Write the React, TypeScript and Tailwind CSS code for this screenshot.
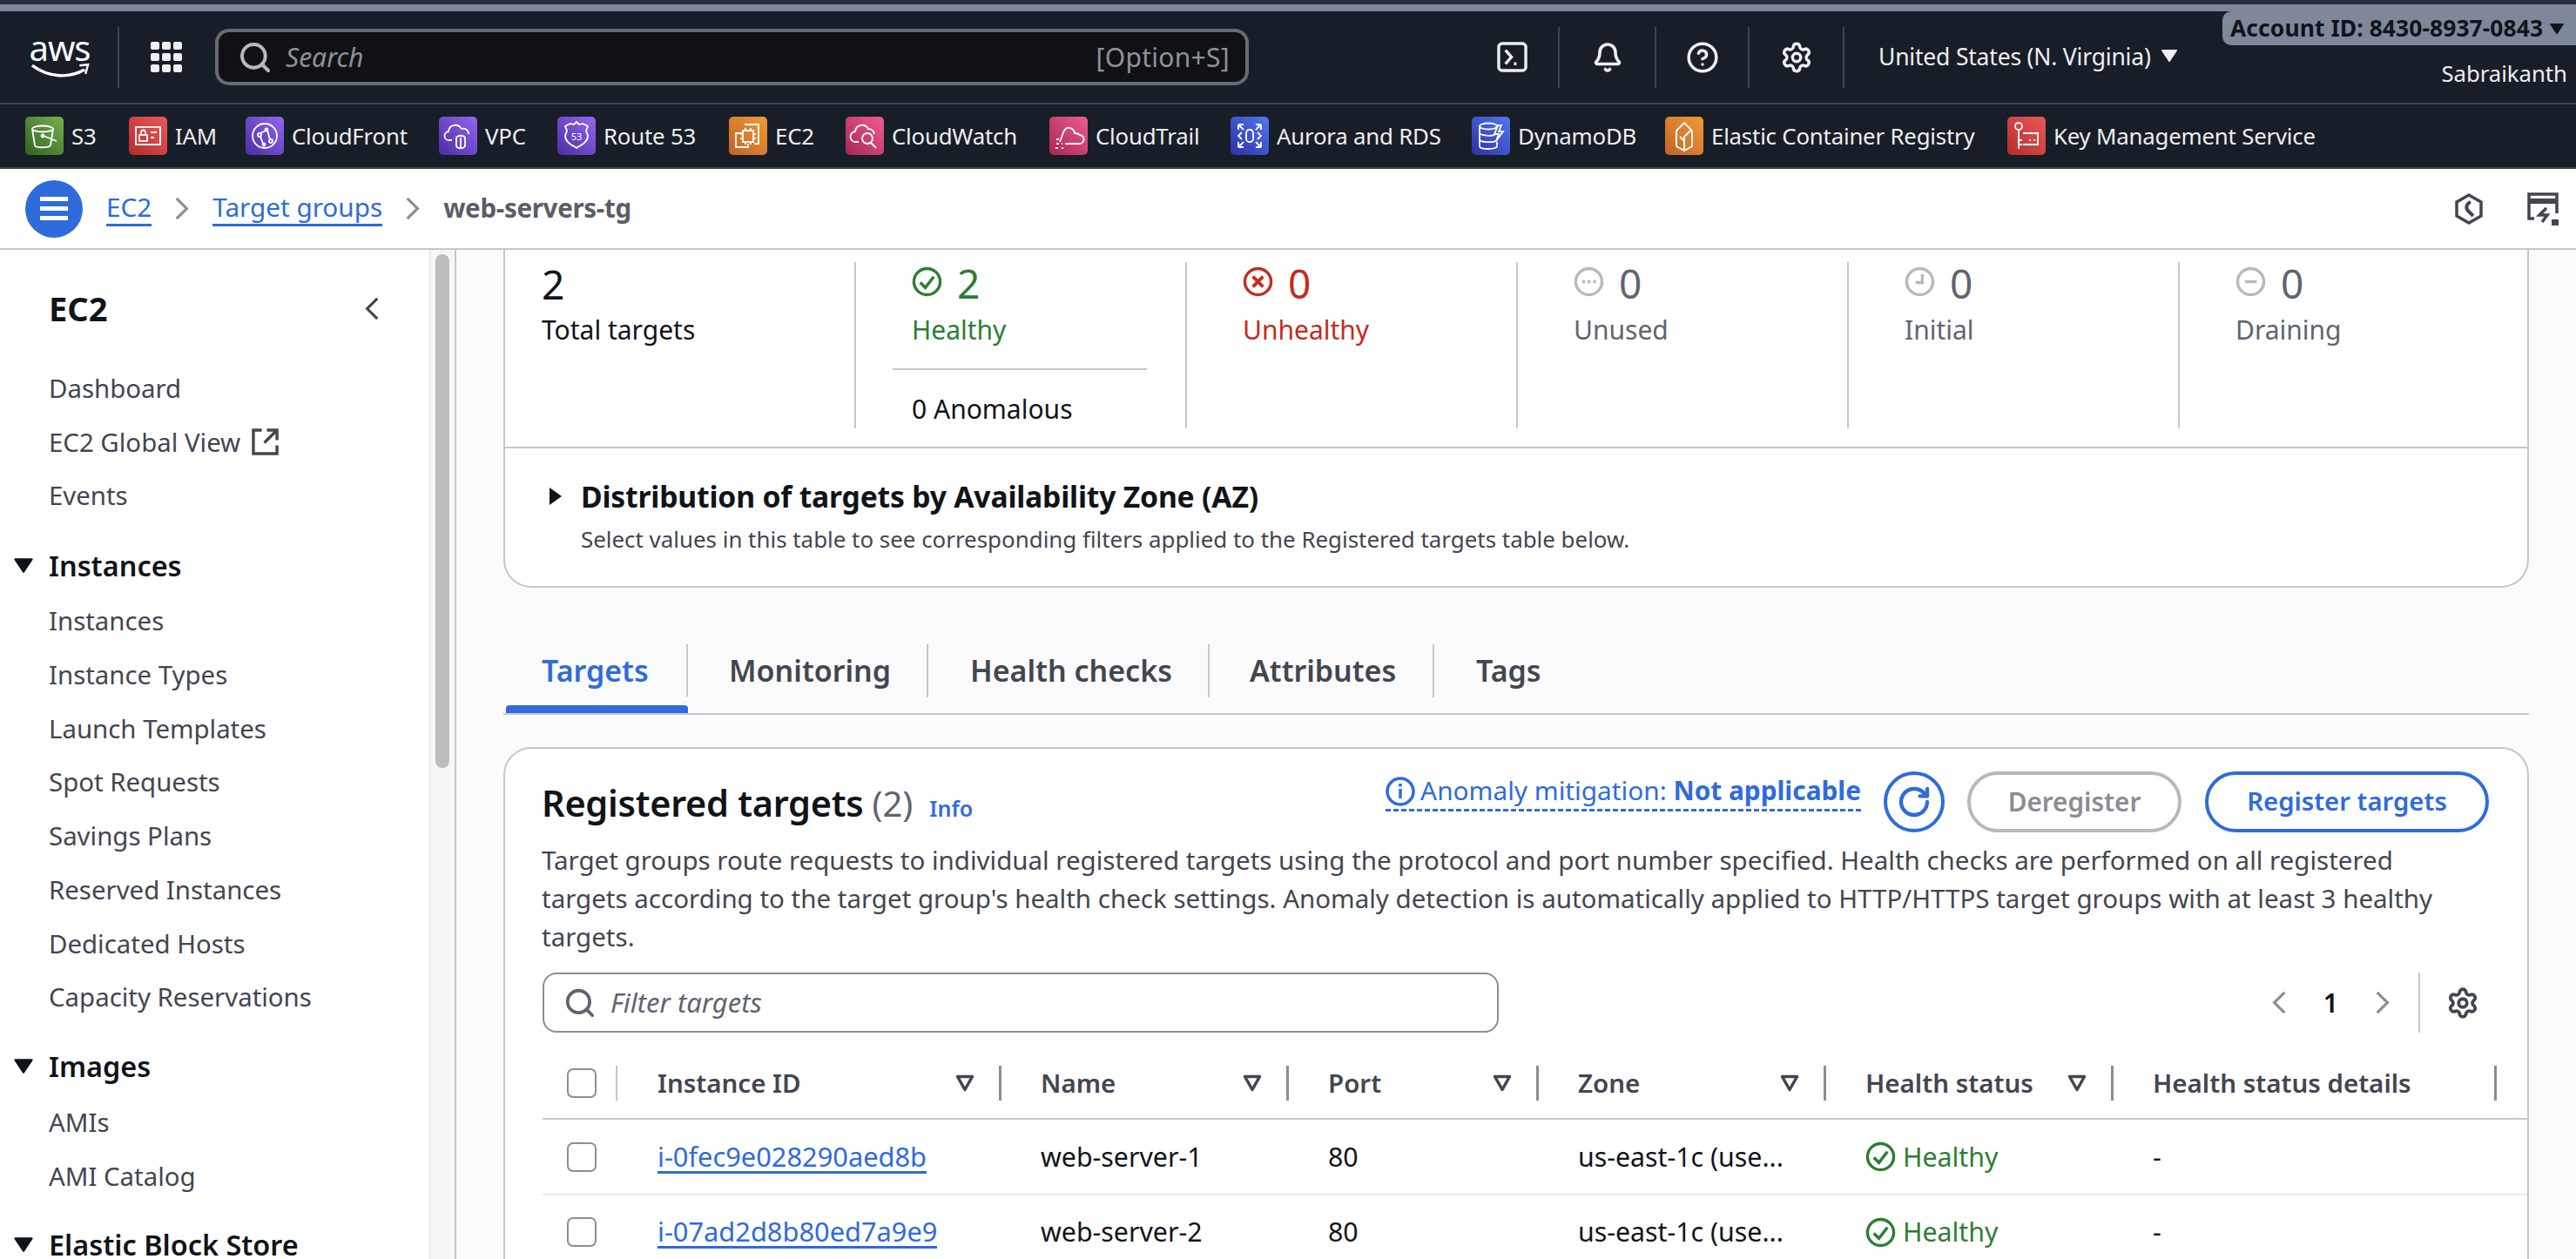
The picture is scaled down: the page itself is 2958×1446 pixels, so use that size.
import { RotateCw, Search, Settings, Bell, CircleHelp } from "lucide-react";
import type { ReactNode } from "react";

const font = { fontFamily: '"Noto Sans", Arial, sans-serif' };

const Tile = ({ cls, children }: { cls: string; children: ReactNode }) => (
  <div className={`w-[44px] h-[44px] rounded-[5px] shrink-0 ${cls}`}>
    <svg viewBox="0 0 44 44" className="w-full h-full" fill="none" stroke="#fff" strokeWidth="1.8">
      {children}
    </svg>
  </div>
);

const green = "bg-linear-to-tr from-[#2f6320] to-[#79b04e]";
const red = "bg-linear-to-tr from-[#b62a2a] to-[#e85a5a]";
const purple = "bg-linear-to-tr from-[#4a2da5] to-[#9566f0]";
const orange = "bg-linear-to-tr from-[#c2622a] to-[#f09c34]";
const pink = "bg-linear-to-tr from-[#a82556] to-[#ee5c8f]";
const blue = "bg-linear-to-tr from-[#2e2fa8] to-[#5278ee]";

const shortcuts: { name: string; w: string; tile: ReactNode }[] = [
  {
    name: "S3",
    w: "w-[119px]",
    tile: (
      <Tile cls={green}>
        <ellipse cx="20" cy="14" rx="12" ry="3.5" />
        <path d="M8 14l3 19c1 3 16 3 18 0l3-19" />
        <circle cx="20" cy="22" r="1.5" />
        <path d="M21 22l15 6" />
      </Tile>
    ),
  },
  {
    name: "IAM",
    w: "w-[134px]",
    tile: (
      <Tile cls={red}>
        <rect x="8" y="12" width="28" height="20" />
        <rect x="12" y="21" width="9" height="7" />
        <path d="M14 21v-3a2.5 2.5 0 0 1 5 0v3M25 18h7M25 24h4" />
      </Tile>
    ),
  },
  {
    name: "CloudFront",
    w: "w-[222px]",
    tile: (
      <Tile cls={purple}>
        <circle cx="22" cy="22" r="14" />
        <circle cx="16" cy="21" r="2" />
        <circle cx="24" cy="15" r="1.5" />
        <circle cx="29" cy="28" r="2" />
        <circle cx="21" cy="32" r="1.5" />
        <path d="M17 19l6-3M25 16l3 10M17 23l3 8" />
      </Tile>
    ),
  },
  {
    name: "VPC",
    w: "w-[136px]",
    tile: (
      <Tile cls={purple}>
        <path d="M15 27h-3a5 5 0 0 1-1-10 8 8 0 0 1 15-3 6 6 0 0 1 8 6" />
        <path d="M20 24c2-3 8-3 10 0v10c-2 3-8 3-10 0z" />
        <path d="M25 24v13" />
      </Tile>
    ),
  },
  {
    name: "Route 53",
    w: "w-[197px]",
    tile: (
      <Tile cls={purple}>
        <path d="M22 6l3 3 4-1 6 3-2 5 2 6c0 7-7 10-13 14-6-4-13-7-13-14l2-6-2-5 6-3 4 1z" />
        <text x="22" y="27" fontSize="11" fill="#fff" stroke="none" textAnchor="middle">
          53
        </text>
      </Tile>
    ),
  },
  {
    name: "EC2",
    w: "w-[134px]",
    tile: (
      <Tile cls={orange}>
        <path d="M18 9h16v22h-5M15 19H8v16h14v-4" />
        <rect x="16" y="16" width="12" height="13" />
        <path d="M19 13v3M25 13v3M19 29v3M25 29v3M13 20h3M13 25h3M28 20h3M28 25h3" />
      </Tile>
    ),
  },
  {
    name: "CloudWatch",
    w: "w-[234px]",
    tile: (
      <Tile cls={pink}>
        <path d="M15 29h-3a6 6 0 0 1-1-12 8 8 0 0 1 15-3 7 7 0 0 1 7 6" />
        <circle cx="25" cy="25" r="6" />
        <path d="M29 30l6 6" />
      </Tile>
    ),
  },
  {
    name: "CloudTrail",
    w: "w-[208px]",
    tile: (
      <Tile cls={pink}>
        <path d="M18 31h16a5 5 0 0 0 1-10 9 9 0 0 0-6-2c-1-6-9-10-13-1l-4 11" />
        <path d="M8 31h3M14 31h1M7 36h3M14 36h2M8 26h3" />
      </Tile>
    ),
  },
  {
    name: "Aurora and RDS",
    w: "w-[277px]",
    tile: (
      <Tile cls={blue}>
        <rect x="18" y="15" width="8" height="14" rx="3.5" />
        <path d="M9 9h6M9 9v6M9 9l6 6M35 9h-6M35 9v6M35 9l-6 6M9 35h6M9 35v-6M9 35l6-6M35 35h-6M35 35v-6M35 35l-6-6M13 18l-4 4 4 4M31 18l4 4-4 4" />
      </Tile>
    ),
  },
  {
    name: "DynamoDB",
    w: "w-[222px]",
    tile: (
      <Tile cls={blue}>
        <ellipse cx="19" cy="11" rx="10" ry="3.5" />
        <path d="M9 11v23c0 4 20 4 20 0v-5M9 18c0 4 15 5 18 2M9 26c0 4 18 4 20 1" />
        <path d="M30 10l-4 10h5l-3 8 8-11h-5l3-7z" />
      </Tile>
    ),
  },
  {
    name: "Elastic Container Registry",
    w: "w-[393px]",
    tile: (
      <Tile cls={orange}>
        <path d="M22 7l9 9v18l-9 5-9-5V16z" />
        <path d="M22 39V23l8-8M22 28l-5-5" />
      </Tile>
    ),
  },
  {
    name: "Key Management Service",
    w: "w-[360px]",
    tile: (
      <Tile cls={red}>
        <circle cx="13" cy="11" r="4" />
        <path d="M13 15v22M13 27h4M13 32h4M18 19h17v13H18" />
        <path d="M25 27h2M30 27h2" />
      </Tile>
    ),
  },
];

const Chev = ({ cls, left }: { cls: string; left?: boolean }) => (
  <svg viewBox="0 0 20 32" className={cls} fill="none" stroke="currentColor" strokeWidth="3.5">
    <path d={left ? "M17 3L4 16l13 13" : "M3 3l13 13L3 29"} />
  </svg>
);

const NavIcon = ({ children, w = "w-[108px]" }: { children: ReactNode; w?: string }) => (
  <div className={`${w} h-[70px] flex items-center justify-center border-r-2 border-[#3f444e]`}>{children}</div>
);

const Tri = ({ cls }: { cls: string }) => (
  <svg viewBox="0 0 20 16" className={cls} fill="currentColor">
    <path d="M2 1h16a1 1 0 0 1 .8 1.6L10.8 14.6a1 1 0 0 1-1.6 0L1.2 2.6A1 1 0 0 1 2 1z" />
  </svg>
);

const TopNav = () => (
  <div className="h-[105px] bg-[#171e27] flex items-center shrink-0 border-b-2 border-[#3f444e] relative box-content">
    <div className="w-[137px] h-[70px] flex flex-col items-center pl-[2px] border-r-2 border-[#3f444e]">
      <span className="text-white text-[40px] leading-[36px] tracking-[-1px] mt-[6px]">aws</span>
      <svg viewBox="0 0 70 22" className="w-[68px] h-[22px] -mt-[1px]" fill="none" stroke="#fff">
        <path d="M2 3c20 15 44 15 62 5" strokeWidth="3.5" />
        <path d="M58 3l10-1-3 11" strokeWidth="2.5" />
      </svg>
    </div>
    <div className="w-[110px] flex justify-center">
      <div className="grid grid-cols-3 gap-[3.5px] pr-[2px]">
        {Array.from({ length: 9 }).map((_, i) => (
          <div key={i} className="w-[9.5px] h-[9.5px] rounded-[2px] bg-[#eeeef2]" />
        ))}
      </div>
    </div>
    <div className="w-[1187px] h-[65px] rounded-[16px] border-[4px] border-[#666a73] bg-[#0f1114] flex items-center pl-[22px] pr-[18px] text-[#8f9198] text-[30px]">
      <Search className="w-[40px] h-[40px] text-[#b8b9be]" strokeWidth={2.4} />
      <span className="italic ml-[15px] flex-1">Search</span>
      <span className="tracking-[0.3px]">[Option+S]</span>
    </div>
    <div className="ml-[249px] flex items-center text-[#eeeef2]">
      <NavIcon w="w-[108px]">
        <svg viewBox="0 0 36 36" className="w-[35px] h-[35px]" fill="none" stroke="currentColor" strokeWidth="3.5">
          <rect x="2" y="2" width="32" height="32" rx="4" />
          <path d="M10 10l7 8-7 8M20 26h3" />
        </svg>
      </NavIcon>
      <NavIcon w="w-[111px]">
        <Bell className="w-[36px] h-[38px]" strokeWidth={2.4} />
      </NavIcon>
      <NavIcon w="w-[107px]">
        <CircleHelp className="w-[38px] h-[38px]" strokeWidth={2.2} />
      </NavIcon>
      <NavIcon w="w-[109px]">
        <Settings className="w-[38px] h-[38px]" strokeWidth={2.2} />
      </NavIcon>
      <div className="flex items-center pl-[39px]">
        <span className="text-[26.5px] tracking-[-0.2px] whitespace-nowrap">United States (N. Virginia)</span>
        <Tri cls="w-[20px] h-[16px] ml-[11px] -mt-[4px]" />
      </div>
    </div>
    <div className="absolute top-0 right-0 w-[406px] h-[39px] bg-[#7f8899] rounded-bl-[10px] rounded-tl-[10px] flex items-center pl-[9px] text-[#0f141a] text-[26.4px] font-bold tracking-[0.1px] whitespace-nowrap">
      Account ID: 8430-8937-0843
      <Tri cls="w-[18px] h-[14px] ml-[7px]" />
    </div>
    <div className="absolute top-[57px] right-[10px] text-[#eeeef2] text-[25.7px] leading-[30px]">Sabraikanth</div>
  </div>
);

const ShortcutBar = () => (
  <div className="h-[72px] bg-[#171e27] flex items-center pl-[29px] border-b-2 border-[#3f444e] box-content shrink-0">
    {shortcuts.map((s) => (
      <div key={s.name} className={`flex items-center gap-[9px] ${s.w} shrink-0`}>
        {s.tile}
        <span className="text-[#eeeef2] text-[25.8px] whitespace-nowrap tracking-[-0.2px]">{s.name}</span>
      </div>
    ))}
  </div>
);

const Breadcrumb = () => (
  <div className="h-[91px] bg-white border-b-2 border-[#c6c6cd] box-content flex items-center pl-[29px] pr-[20px] shrink-0 text-[29.7px]">
    <div className="w-[66px] h-[66px] rounded-full bg-[#2f6bdb] flex flex-col items-center justify-center gap-[6px]">
      <div className="w-[32px] h-[5px] bg-white" />
      <div className="w-[32px] h-[5px] bg-white" />
      <div className="w-[32px] h-[5px] bg-white" />
    </div>
    <span className="ml-[27px] text-[#2f6bdb] border-b-[3px] border-[#2f6bdb] leading-[38px]">EC2</span>
    <Chev cls="mx-[26px] w-[18px] h-[29px] text-[#8c8c94]" />
    <span className="text-[#2f6bdb] border-b-[3px] border-[#2f6bdb] leading-[38px]">Target groups</span>
    <Chev cls="mx-[26px] w-[18px] h-[29px] text-[#8c8c94]" />
    <span className="font-bold text-[#5a5d66] text-[29.5px] tracking-[-0.3px]">web-servers-tg</span>
    <div className="ml-auto flex items-center gap-[50px] text-[#424650]">
      <svg viewBox="0 0 34 36" className="w-[34px] h-[36px]" fill="none" stroke="currentColor" strokeWidth="3.5">
        <path d="M17 2l14 8v16l-14 8-14-8V10z" />
        <path d="M19 10c-5 2-6 7-3 10l6 6" strokeWidth="4" />
      </svg>
      <svg viewBox="0 0 36 38" className="w-[36px] h-[38px]" fill="none" stroke="currentColor" strokeWidth="3.5">
        <path d="M8 30H2V2h32v22" />
        <path d="M2 10h32" strokeWidth="6" />
        <path d="M22 18l-8 8h9l-6 8" />
        <rect x="28" y="31" width="8" height="7" fill="currentColor" stroke="none" />
      </svg>
    </div>
  </div>
);

const NavRow = ({ children }: { children: ReactNode }) => (
  <div className="h-[61.75px] flex items-center pl-[56px] text-[#424650] text-[29.4px] whitespace-nowrap">{children}</div>
);

const NavHead = ({ label, cls }: { label: string; cls: string }) => (
  <div className={`h-[62px] flex items-center pl-[15px] text-[#0f141a] text-[32.4px] font-semibold whitespace-nowrap ${cls}`}>
    <Tri cls="w-[24px] h-[19px] mr-[17px]" />
    {label}
  </div>
);

const Sidebar = () => (
  <div className="w-[524px] shrink-0 flex border-r-2 border-[#c6c6cd] bg-white overflow-hidden">
    <div className="w-[493px] shrink-0">
      <div className="mt-[38px] h-[58px] flex items-center justify-between pl-[56px] pr-[57px]">
        <span className="text-[38px] font-bold text-[#0f141a]">EC2</span>
        <Chev left cls="w-[18px] h-[29px] text-[#424650]" />
      </div>
      <div className="mt-[32px]">
        <NavRow>Dashboard</NavRow>
        <NavRow>
          EC2 Global View
          <svg viewBox="0 0 32 32" className="w-[31px] h-[31px] ml-[13px]" fill="none" stroke="currentColor" strokeWidth="3.5">
            <path d="M12 2H2v28h28V20M18 2h12v12M30 2L15 17" />
          </svg>
        </NavRow>
        <NavRow>Events</NavRow>
      </div>
      <NavHead label="Instances" cls="mt-[18px]" />
      <div className="mt-[2px]">
        {["Instances", "Instance Types", "Launch Templates", "Spot Requests", "Savings Plans", "Reserved Instances", "Dedicated Hosts", "Capacity Reservations"].map((t) => (
          <NavRow key={t}>{t}</NavRow>
        ))}
      </div>
      <NavHead label="Images" cls="mt-[17px]" />
      <div className="mt-[3px]">
        <NavRow>AMIs</NavRow>
        <NavRow>AMI Catalog</NavRow>
      </div>
      <NavHead label="Elastic Block Store" cls="mt-[17px]" />
    </div>
    <div className="flex-1 bg-[#f7f7f7] border-l-2 border-[#ececec] pl-[5px] pt-[5px]">
      <div className="w-[16px] h-[590px] rounded-full bg-[#bdbdbd]" />
    </div>
  </div>
);

const StatIcon = ({ kind, color }: { kind: string; color: string }) => (
  <svg viewBox="0 0 36 36" className={`w-[35px] h-[35px] shrink-0 ${color}`} fill="none" stroke="currentColor" strokeWidth="3.5">
    <circle cx="18" cy="18" r="15.5" />
    {kind === "check" && <path d="M10 19l6 6 10-13" strokeWidth="3.5" />}
    {kind === "x" && <path d="M12 12l12 12M24 12L12 24" strokeWidth="4" />}
    {kind === "dots" && <path d="M10 18h3.5M16.5 18h3.5M23 18h3.5" strokeWidth="3.5" />}
    {kind === "clock" && <path d="M21 9v10h-8" strokeWidth="3.5" />}
    {kind === "minus" && <path d="M11 18h14" strokeWidth="3.5" />}
  </svg>
);

const Stat = ({ num, label, kind, numCls, iconCls, last }: { num: string; label: string; kind: string; numCls: string; iconCls: string; last?: boolean }) => (
  <div className={`w-[380px] pl-[64px] ${last ? "" : "border-r-2 border-[#c6c6cd]"} h-[191px] shrink-0`}>
    <div className={`flex items-center gap-[17px] h-[44px] text-[46px] ${numCls}`}>
      <StatIcon kind={kind} color={iconCls} />
      <span className="leading-[44px] mt-[3px]">{num}</span>
    </div>
    <div className={`mt-[12px] text-[30px] leading-[44px] ${numCls}`}>{label}</div>
  </div>
);

const StatsPanel = () => (
  <div className="bg-white border-x-2 border-b-2 border-[#c6c6cd] rounded-b-[32px] h-[388px]">
    <div className="flex pt-[14px] h-[228px] border-b-2 border-[#c6c6cd]">
      <div className="w-[403px] pl-[42px] shrink-0 border-r-2 border-[#c6c6cd] h-[191px]">
        <div className="h-[44px] text-[46px] text-[#0f141a] leading-[44px] pt-[3px]">2</div>
        <div className="mt-[12px] text-[30px] leading-[44px] text-[#0f141a]">Total targets</div>
      </div>
      <div className="w-[380px] pl-[64px] pr-[44px] shrink-0 border-r-2 border-[#c6c6cd] h-[191px]">
        <div className="flex items-center gap-[17px] h-[44px] text-[46px] text-[#2e7d32]">
          <StatIcon kind="check" color="text-[#2e7d32]" />
          <span className="leading-[44px] mt-[3px]">2</span>
        </div>
        <div className="mt-[12px] text-[30px] leading-[44px] text-[#2e7d32]">Healthy</div>
        <div className="-ml-[22px] mt-[22px] h-[2px] bg-[#c6c6cd]" />
        <div className="mt-[23px] text-[30px] leading-[44px] text-[#0f141a]">0 Anomalous</div>
      </div>
      <Stat num="0" label="Unhealthy" kind="x" numCls="text-[#c62a20]" iconCls="text-[#c62a20]" />
      <Stat num="0" label="Unused" kind="dots" numCls="text-[#5f6470]" iconCls="text-[#b8b8bf]" />
      <Stat num="0" label="Initial" kind="clock" numCls="text-[#5f6470]" iconCls="text-[#b8b8bf]" />
      <Stat num="0" label="Draining" kind="minus" numCls="text-[#5f6470]" iconCls="text-[#b8b8bf]" last />
    </div>
    <div className="pl-[49px] pt-[33px]">
      <div className="flex items-center h-[44px]">
        <svg viewBox="0 0 18 24" className="w-[18px] h-[24px] text-[#0f141a]" fill="currentColor">
          <path d="M2 2l14 10L2 22z" />
        </svg>
        <span className="ml-[20px] text-[33.7px] font-bold text-[#0f141a] tracking-[-0.2px]">Distribution of targets by Availability Zone (AZ)</span>
      </div>
      <div className="ml-[38px] mt-[9px] text-[25.9px] leading-[36px] text-[#424650]">
        Select values in this table to see corresponding filters applied to the Registered targets table below.
      </div>
    </div>
  </div>
);

const tabs = [
  { t: "Targets", w: "w-[212px]", p: "pl-[44px]" },
  { t: "Monitoring", w: "w-[276px]", p: "pl-[47px]" },
  { t: "Health checks", w: "w-[323px]", p: "pl-[48px]" },
  { t: "Attributes", w: "w-[258px]", p: "pl-[46px]" },
  { t: "Tags", w: "w-[160px]", p: "pl-[48px]" },
];

const Tabs = () => (
  <div className="mt-[56px] h-[90px] border-b-2 border-[#c6c6cd] flex text-[34px] font-semibold">
    {tabs.map((t, i) => (
      <div key={t.t} className={`${t.w} flex flex-col`}>
        <div className={`h-[61px] mt-[9px] flex items-center ${t.p} ${i < 4 ? "border-r-2 border-[#c6c6cd]" : ""} ${i === 0 ? "text-[#2f6bdb]" : "text-[#424650]"}`}>
          {t.t}
        </div>
        {i === 0 && <div className="mt-[10px] ml-[3px] h-[9px] rounded-t-[4px] bg-[#2f6bdb]" />}
      </div>
    ))}
  </div>
);

const Funnel = () => (
  <svg viewBox="0 0 22 20" className="w-[22px] h-[20px] text-[#424650]" fill="none" stroke="currentColor" strokeWidth="3.5">
    <path d="M2.5 2.5h17L11 17.5z" strokeLinejoin="round" />
  </svg>
);

const cols = [
  { t: "Instance ID", w: "w-[440px]", f: true },
  { t: "Name", w: "w-[330px]", f: true },
  { t: "Port", w: "w-[287px]", f: true },
  { t: "Zone", w: "w-[330px]", f: true },
  { t: "Health status", w: "w-[330px]", f: true },
  { t: "Health status details", w: "w-[440px]", f: false },
];

const Check = () => <div className="w-[34px] h-[34px] rounded-[7px] border-2 border-[#8c8c94] bg-white" />;

const Row = ({ id, name, cls }: { id: string; name: string; cls: string }) => (
  <div className={`flex items-center text-[30.3px] text-[#0f141a] ${cls}`}>
    <div className="w-[87px] pl-[28px]">
      <Check />
    </div>
    <div className="w-[440px] pl-[45px]">
      <span className="text-[#2f6bdb] text-[30.8px] border-b-[3px] border-[#2f6bdb] leading-[34px] inline-block">{id}</span>
    </div>
    <div className="w-[330px] pl-[45px]">{name}</div>
    <div className="w-[287px] pl-[45px]">80</div>
    <div className="w-[330px] pl-[45px]">us-east-1c (use...</div>
    <div className="w-[330px] pl-[45px] flex items-center gap-[8px] text-[#2e7d32]">
      <StatIcon kind="check" color="text-[#2e7d32]" />
      Healthy
    </div>
    <div className="pl-[45px]">-</div>
  </div>
);

const TargetsCard = () => (
  <div className="mt-[37px] bg-white border-2 border-[#c6c6cd] rounded-t-[32px] pt-[26px]">
    <div className="flex items-start pl-[42px] pr-[44px] h-[72px]">
      <div className="flex items-baseline mt-[5px]">
        <span className="text-[41.5px] font-semibold text-[#0f141a] tracking-[-0.3px]">Registered targets</span>
        <span className="text-[40px] text-[#5f6470] ml-[10px]">(2)</span>
        <span className="text-[25px] text-[#2f6bdb] ml-[19px] font-semibold">Info</span>
      </div>
      <div className="ml-auto mt-[2px] h-[44px] flex items-center gap-[6px] border-b-[3px] border-dashed border-[#2f6bdb] text-[#2f6bdb] text-[29.8px] whitespace-nowrap">
        <svg viewBox="0 0 34 34" className="w-[34px] h-[34px]" fill="none" stroke="currentColor" strokeWidth="3.5">
          <circle cx="17" cy="17" r="15" />
          <path d="M17 14v11M17 8v3.5" />
        </svg>
        <span>
          Anomaly mitigation: <span className="font-bold">Not applicable</span>
        </span>
      </div>
      <div className="ml-[26px] w-[70px] h-[70px] rounded-full border-[4px] border-[#2f6bdb] flex items-center justify-center text-[#2f6bdb]">
        <RotateCw className="w-[40px] h-[40px]" strokeWidth={2.6} />
      </div>
      <div className="ml-[26px] w-[246px] h-[70px] rounded-full border-[4px] border-[#b8b8bf] flex items-center justify-center text-[#8c8c94] text-[29.7px] font-semibold">Deregister</div>
      <div className="ml-[27px] w-[326px] h-[70px] rounded-full border-[4px] border-[#2f6bdb] flex items-center justify-center text-[#2f6bdb] text-[29.3px] font-semibold">Register targets</div>
    </div>
    <div className="ml-[42px] mr-[60px] mt-[8px] text-[29.5px] leading-[44px] text-[#424650]">
      Target groups route requests to individual registered targets using the protocol and port number specified. Health checks are performed on all registered targets according to the target group's health check settings. Anomaly detection is automatically applied to HTTP/HTTPS target groups with at least 3 healthy targets.
    </div>
    <div className="mt-[19px] pl-[43px] pr-[55px] flex items-center h-[69px]">
      <div className="w-[1098px] h-[69px] rounded-[16px] border-2 border-[#8c8c94] flex items-center pl-[22px]">
        <Search className="w-[38px] h-[38px] text-[#5f6470]" strokeWidth={2.4} />
        <span className="ml-[16px] italic text-[31px] text-[#5f6470]">Filter targets</span>
      </div>
      <div className="ml-auto flex items-center h-[69px] text-[#8c8c94]">
        <Chev left cls="w-[18px] h-[29px]" />
        <span className="mx-[42px] text-[30px] font-semibold text-[#0f141a]">1</span>
        <Chev cls="w-[18px] h-[29px]" />
        <div className="ml-[32px] h-[69px] w-[2px] bg-[#c6c6cd]" />
        <Settings className="ml-[30px] w-[38px] h-[38px] text-[#424650]" strokeWidth={2.4} />
      </div>
    </div>
    <div className="mt-[18px] ml-[43px]">
      <div className="flex items-center h-[80px] border-b-2 border-[#c6c6cd] box-content text-[29.5px] font-semibold text-[#424650]">
        <div className="w-[87px] pl-[28px] flex items-center">
          <Check />
          <div className="ml-[22px] w-[2px] h-[40px] bg-[#c6c6cd]" />
        </div>
        {cols.map((c) => (
          <div key={c.t} className={`${c.w} pl-[45px] flex items-center justify-between`}>
            <span className="whitespace-nowrap">{c.t}</span>
            <div className="flex items-center gap-[28px]">
              {c.f && <Funnel />}
              <div className="w-[3px] h-[40px] bg-[#8c8c94]" />
            </div>
          </div>
        ))}
      </div>
      <Row id="i-0fec9e028290aed8b" name="web-server-1" cls="h-[85px] border-b-2 border-[#e9ebed] box-content" />
      <Row id="i-07ad2d8b80ed7a9e9" name="web-server-2" cls="h-[84px]" />
    </div>
  </div>
);

export default function App() {
  return (
    <div className="w-[2958px] h-[1446px] overflow-hidden flex flex-col bg-[#fbfbfc]" style={font}>
      <div className="h-[5px] bg-[#2b2f3d] shrink-0" />
      <div className="h-[8px] bg-[#7f8899] shrink-0" />
      <TopNav />
      <ShortcutBar />
      <Breadcrumb />
      <div className="flex flex-1 min-h-0">
        <Sidebar />
        <div className="w-[2326px] ml-[54px] shrink-0">
          <StatsPanel />
          <Tabs />
          <TargetsCard />
        </div>
      </div>
    </div>
  );
}
